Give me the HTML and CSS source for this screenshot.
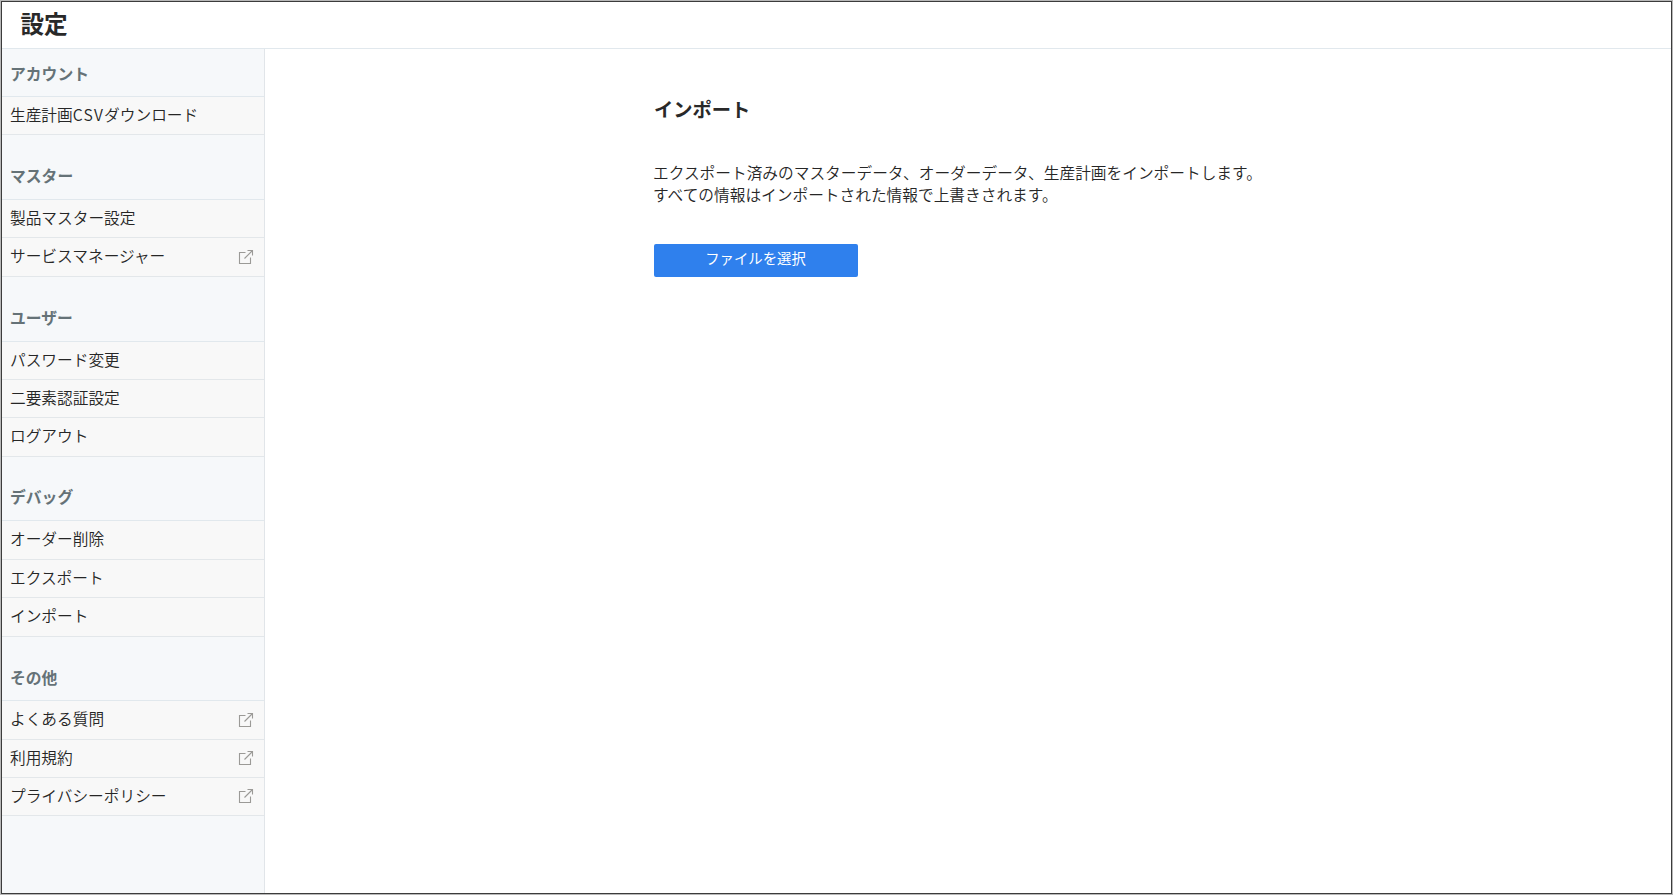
FILE: index.html
```html
<!DOCTYPE html>
<html lang="ja">
<head>
<meta charset="utf-8">
<title>設定</title>
<link rel="stylesheet" href="styles.css">
</head>
<body>
<svg class="sprite" aria-hidden="true">
  <symbol id="external" viewBox="0 0 16 16">
    <path d="M7.5 3.5H1.5V14.5H12.5V8.5" />
    <path d="M9.5 1.5H14.5V6.5M14.5 1.5L6.5 9.5" />
  </symbol>
</svg>
<div class="window">
  <header class="header"><h1 class="title">設定</h1></header>
  <div class="body">
    <nav class="sidebar">
      <h2 class="group first">アカウント</h2>
      <a class="item">生産計画<span class="latin">CSV</span>ダウンロード</a>
      <h2 class="group">マスター</h2>
      <a class="item">製品マスター設定</a>
      <a class="item tall">サービスマネージャー<svg class="icon"><use href="#external"/></svg></a>
      <h2 class="group">ユーザー</h2>
      <a class="item">パスワード変更</a>
      <a class="item">二要素認証設定</a>
      <a class="item tall">ログアウト</a>
      <h2 class="group short">デバッグ</h2>
      <a class="item tall">オーダー削除</a>
      <a class="item">エクスポート</a>
      <a class="item tall">インポート</a>
      <h2 class="group short last">その他</h2>
      <a class="item tall">よくある質問<svg class="icon"><use href="#external"/></svg></a>
      <a class="item">利用規約<svg class="icon"><use href="#external"/></svg></a>
      <a class="item">プライバシーポリシー<svg class="icon"><use href="#external"/></svg></a>
    </nav>
    <main class="main">
      <section class="panel">
        <h2 class="heading">インポート</h2>
        <p class="text">エクスポート済みのマスターデータ、オーダーデータ、生産計画をインポートします。<br>すべての情報はインポートされた情報で上書きされます。</p>
        <button class="button" type="button">ファイルを選択</button>
      </section>
    </main>
  </div>
</div>
</body>
</html>
```
FILE: styles.css
```css
* { box-sizing: border-box; }
body {
  margin: 0;
  height: 895px;
  overflow: hidden;
  border: 1px solid #b8b8b8;
  font-family: "Noto Sans CJK JP", sans-serif;
  font-size: 15.7px;
  font-weight: 350;
  color: #262626;
}
h1, h2, p { margin: 0; }
.sprite { display: none; }
.window {
  height: 893px;
  border: 1px solid #3c3c3c;
  display: flex;
  flex-direction: column;
  background: #fff;
}
.header {
  height: 47px;
  padding-left: 18.5px;
  border-bottom: 1px solid #e1e8ed;
}
.title { font-size: 23.6px; line-height: 42px; font-weight: 700; color: #292929; }
.body { flex: 1; display: flex; min-height: 0; }
.sidebar {
  width: 263px;
  background: #f6f8fa;
  border-right: 1px solid #e1e5e9;
}
.group {
  height: 65px;
  padding: 30px 8px 0;
  border-bottom: 1px solid #e1e8ed;
  font-size: 15.8px;
  line-height: 22px;
  font-weight: 700;
  color: #657277;
}
.group.short { height: 64px; padding-top: 29px; }
.group.last { padding-top: 30px; }
.group.first { height: 48px; padding-top: 14px; }
.item {
  display: flex;
  align-items: center;
  height: 38px;
  padding: 0 10px 2px 8px;
  border-bottom: 1px solid #e3e7ea;
  background: #f8f8f8;
  line-height: 22px;
}
.item.tall { height: 39px; }
.latin { letter-spacing: 1.2px; }
.icon {
  width: 16px;
  height: 16px;
  margin-left: auto;
  margin-top: 1px;
  fill: none;
  stroke: #9b9a97;
  stroke-width: 1.1;
}
.main { flex: 1; padding: 47px 0 0 388px; }
.panel { padding-left: 1px; }
.heading { font-size: 19.3px; line-height: 26px; font-weight: 700; color: #292929; }
.text { margin: 40px 0 0 -1px; line-height: 22px; }
.button {
  display: block;
  width: 204px;
  height: 33px;
  margin-top: 38px;
  padding: 0 1px 5px 0;
  border: 0;
  border-radius: 2px;
  background: #2f80ed;
  color: #fff;
  font: 400 14.4px/28px "Noto Sans CJK JP", sans-serif;
}
```
